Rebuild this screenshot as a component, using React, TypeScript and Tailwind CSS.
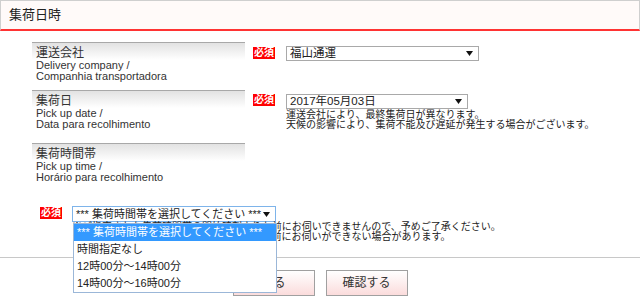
import React from "react";

const Arrow = () => (
  <svg width="7" height="5" viewBox="0 0 7 5" className="shrink-0">
    <path d="M0 0h7L3.5 5z" fill="#111" />
  </svg>
);

const Badge = () => (
  <span className="flex h-[12px] w-[22px] shrink-0 items-center justify-center bg-[#f00] text-[10px] font-bold leading-none text-white">
    必須
  </span>
);

function Label({ ja, en1, en2, h }: { ja: string; en1: string; en2: string; h: string }) {
  return (
    <div
      className={`w-[213px] shrink-0 border-t border-[#a8a8a8] bg-[linear-gradient(to_bottom,#e2e2e2,#fff_17px)] pl-[4px] pt-[5px] ${h}`}
    >
      <p className="text-[12px] leading-[11.5px] text-[#333]">{ja}</p>
      <p className="text-[11px] leading-[11.5px] text-[#333]">{en1}</p>
      <p className="text-[11px] leading-[11.5px] text-[#333]">{en2}</p>
    </div>
  );
}

const OPTIONS = ["時間指定なし", "12時00分～14時00分", "14時00分～16時00分"];

export default function App() {
  return (
    <div className="relative h-[298px] w-[640px] overflow-hidden bg-white font-['Liberation_Sans','Noto_Sans_CJK_JP',sans-serif] text-[#222]">
      {/* Header */}
      <div className="flex h-[31px] items-center border border-b-2 border-[#cfcfcf] border-b-[#f33] bg-[#fffaf9] pl-[8px] text-[13px] text-[#222]">
        集荷日時
      </div>

      <div className="pl-[32px] pt-[11px]">
        {/* Delivery company */}
        <div className="flex h-[48px] items-start">
          <Label ja="運送会社" en1="Delivery company /" en2="Companhia transportadora" h="h-[44px]" />
          <div className="ml-[8px] mt-[5px]">
            <Badge />
          </div>
          <div className="ml-[11px] mt-[4px] flex h-[15px] w-[193px] items-center justify-between whitespace-nowrap border border-[#a9a9a9] bg-white pl-[3px] pr-[5px] text-[11.5px] leading-none">
            <span>福山通運</span>
            <Arrow />
          </div>
        </div>

        {/* Pick up date */}
        <div className="flex h-[53px] items-start">
          <Label ja="集荷日" en1="Pick up date /" en2="Data para recolhimento" h="h-[44px]" />
          <div className="ml-[8px] mt-[4px]">
            <Badge />
          </div>
          <div className="ml-[11px] mt-[4px]">
            <div className="flex h-[15px] w-[182px] items-center justify-between whitespace-nowrap border border-[#a9a9a9] bg-white pl-[3px] pr-[5px] text-[11.5px] leading-none">
              <span>2017年05月03日</span>
              <Arrow />
            </div>
            <p className="mt-[1px] whitespace-nowrap text-[10px] leading-[10px] text-[#222]">
              運送会社により、最終集荷日が異なります。
            </p>
            <p className="whitespace-nowrap text-[10px] leading-[10px] text-[#222]">
              天候の影響により、集荷不能及び遅延が発生する場合がございます。
            </p>
          </div>
        </div>

        {/* Pick up time */}
        <Label ja="集荷時間帯" en1="Pick up time /" en2="Horário para recolhimento" h="h-[63px]" />
        <div className="flex items-start pl-[8px]">
          <div className="mt-[1px]">
            <Badge />
          </div>
          <div className="ml-[10px]">
            <div className="flex h-[16px] w-[204px] items-center justify-between whitespace-nowrap border border-[#7eb4ea] bg-white pl-[3px] pr-[5px] text-[11px] leading-none">
              <span>*** 集荷時間帯を選択してください ***</span>
              <Arrow />
            </div>
            <p className="whitespace-nowrap text-[10px] leading-[10px] text-[#222]">
              ※ご指定された集荷時間帯の開始時刻よりも前にお伺いできませんので、予めご了承ください。
            </p>
            <p className="whitespace-nowrap text-[10px] leading-[10px] text-[#222]">
              ※天候・交通事情により、指定時間帯の終了前にお伺いができない場合があります。
            </p>
          </div>
        </div>
      </div>

      {/* Divider */}
      <div className="mt-[15px] border-t border-[#c8c8c8]" />

      {/* Buttons */}
      <div className="mt-[12px] flex justify-center gap-[11px]">
        {["戻る", "確認する"].map((t) => (
          <button
            key={t}
            className="flex h-[26px] w-[82px] items-center justify-center border border-[#a0a0a0] bg-[linear-gradient(to_bottom,#fff,#fbdcdc)] text-[12px] text-[#333]"
          >
            {t}
          </button>
        ))}
      </div>

      {/* Open select list */}
      <div className="absolute left-[73px] top-[223px] w-[204px] whitespace-nowrap border border-[#9bb7d8] bg-white text-[11px]">
        <div className="flex h-[17px] items-center bg-[#3399ff] pl-[3px] text-white">
          *** 集荷時間帯を選択してください ***
        </div>
        {OPTIONS.map((o) => (
          <div key={o} className="flex h-[17px] items-center pl-[3px] text-[#222]">
            {o}
          </div>
        ))}
      </div>
    </div>
  );
}
